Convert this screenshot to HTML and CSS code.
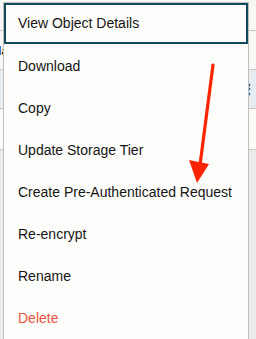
FILE: index.html
```html
<!DOCTYPE html>
<html lang="en">
<head>
    <meta charset="UTF-8">
    <title>Object Actions</title>
    <link rel="stylesheet" href="styles.css">
</head>
<body>
    <div class="page">
        <div class="search-row">
            <div class="search-box">Search by prefix</div>
        </div>
        <div class="table-row head-row">
            <span class="cell-text">Na</span>
        </div>
        <div class="table-row">
            <span class="cell-text">d</span>
            <span class="kebab">&#8942;</span>
        </div>
        <div class="table-row empty-row"></div>
    </div>

    <!-- Actions menu opened over the table -->
    <ul class="menu">
        <li class="menu-item focused">View Object Details</li>
        <li class="menu-item">Download</li>
        <li class="menu-item">Copy</li>
        <li class="menu-item">Update Storage Tier</li>
        <li class="menu-item">Create Pre-Authenticated Request</li>
        <li class="menu-item">Re-encrypt</li>
        <li class="menu-item">Rename</li>
        <li class="menu-item danger">Delete</li>
    </ul>

    <!-- Annotation arrow -->
    <svg class="arrow" width="256" height="339" viewBox="0 0 256 339">
        <line x1="213" y1="65" x2="200" y2="165" stroke="#ff2400" stroke-width="3.2" stroke-linecap="round"/>
        <polygon points="189,160 209,164 197,183" fill="#ff2400"/>
    </svg>
</body>
</html>
```

FILE: styles.css
```css
body {
    margin: 0;
    font-family: "Liberation Sans", Arial, sans-serif;
    background-color: #ebebeb;
    width: 256px;
    height: 339px;
    overflow: hidden;
    position: relative;
}

.page {
    display: flex;
    flex-direction: column;
}

.search-row {
    height: 30px;
    background-color: #f7f7f5;
    border-bottom: 1px solid #c9c6c2;
    padding-left: 58px;
}

.search-box {
    width: 130px;
    height: 2px;
    border-bottom: 1px solid #b9b6b2;
    font-size: 8px;
    color: #9a9894;
    overflow: hidden;
}

.table-row {
    height: 38px;
    display: flex;
    align-items: center;
    justify-content: space-between;
    border-bottom: 1px solid #c9c6c2;
    background-color: #fbfbf9;
}

.head-row {
    background-color: #f7f7f5;
}

.head-row .cell-text {
    font-weight: bold;
}

.table-row:nth-child(3) {
    background-color: #e6edf2;
}

.cell-text {
    font-size: 13px;
    color: #161513;
    margin-left: -8px;
}

.kebab {
    font-size: 12px;
    font-weight: bold;
    color: #333;
    margin-right: 1px;
}

.empty-row {
    height: 40px;
}

/* Dropdown menu */
.menu {
    position: absolute;
    left: 3px;
    top: 2px;
    width: 244px;
    margin: 0;
    padding: 0;
    list-style: none;
    background-color: #fdfdfb;
    border: 1px solid #c2beb9;
    border-bottom: none;
    height: 340px;
}

.menu-item {
    height: 42px;
    line-height: 42px;
    padding-left: 14px;
    font-size: 14px;
    color: #161513;
    box-sizing: border-box;
}

.menu-item.focused {
    height: 41px;
    line-height: 37px;
    padding-left: 12px;
    border: 2px solid #0e4a5c;
    margin-bottom: 1px;
}

.menu-item.danger {
    color: #e8533e;
}

.arrow {
    position: absolute;
    left: 0;
    top: 0;
    pointer-events: none;
}
```
